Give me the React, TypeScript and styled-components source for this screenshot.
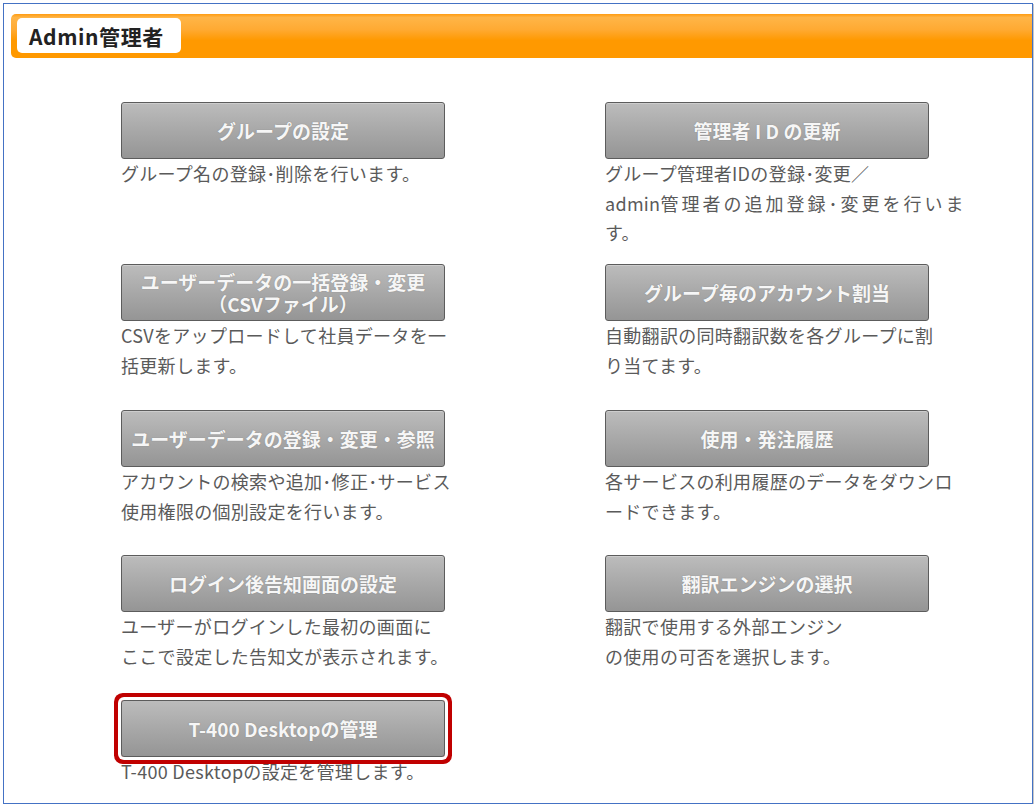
import React from 'react';
import styled, { createGlobalStyle } from 'styled-components';

const GlobalStyle = createGlobalStyle`
  html, body {
    margin: 0;
    padding: 0;
    background: #ffffff;
  }
  body {
    font-family: "Noto Sans CJK JP", "Noto Sans", sans-serif;
  }
`;

// Outer page frame with the thin blue rule
const Frame = styled.div`
  box-sizing: border-box;
  width: 1030px;
  height: 801px;
  margin: 3px 0 0 3px;
  border: 1px solid #4472c4;
  box-shadow: 1px 1px 0 #c8c8c8;
  background: #ffffff;
  overflow: hidden;
`;

// Orange heading bar
const HeaderBar = styled.div`
  display: flex;
  align-items: stretch;
  height: 44px;
  margin: 10px 0 0 7px;
  padding: 4px 0 5px 6px;
  box-sizing: border-box;
  border-radius: 5px 0 0 5px;
  background: linear-gradient(
    to bottom,
    #ff9c12 0%,
    #ffb547 8%,
    #ffaa33 35%,
    #ff9900 60%,
    #ff9900 100%
  );
`;

const TitleTab = styled.div`
  display: flex;
  align-items: center;
  width: 164px;
  box-sizing: border-box;
  padding-left: 12px;
  background: #ffffff;
  border-radius: 5px;
  font-size: 21px;
  font-weight: 700;
  letter-spacing: 0.6px;
  color: #222222;
`;

// Two-column menu
const MenuGrid = styled.div`
  display: grid;
  grid-template-columns: 484px 1fr;
  grid-template-rows: 162px 146px 145px 145px auto;
  margin-top: 44px;
  padding-left: 117px;
`;

const MenuItem = styled.div`
  display: flex;
  flex-direction: column;
  align-items: flex-start;
`;

const MenuButton = styled.button<{ $highlighted?: boolean }>`
  flex-shrink: 0;
  box-sizing: border-box;
  width: 324px;
  height: 57px;
  padding: 0;
  border: 1px solid #5c5c5c;
  border-radius: 3px;
  background: linear-gradient(to bottom, #bcbcbc 0%, #a8a8a8 50%, #959595 100%);
  box-shadow: ${(p) =>
    p.$highlighted
      ? '0 0 0 3px #ffffff, 0 0 0 7px #c00000'
      : 'inset 0 1px 0 rgba(255, 255, 255, 0.25)'};
  font-family: "Noto Sans CJK JP", "Noto Sans", sans-serif;
  font-size: 19px;
  font-weight: 700;
  line-height: 22px;
  color: #f6f6f6;
  text-shadow: 0 0 1px rgba(90, 90, 90, 0.6);
  white-space: nowrap;
  cursor: pointer;
`;

const ButtonLine = styled.span`
  display: block;
`;

const Description = styled.p`
  margin: 0;
  font-size: 18px;
  line-height: 29.5px;
  letter-spacing: 0.3px;
  color: #5a5a5a;
  white-space: nowrap;
`;

const Spread = styled.span<{ $gap: number }>`
  letter-spacing: ${(p) => p.$gap}px;
`;

const App: React.FC = () => {
  return (
    <>
      <GlobalStyle />
      <Frame>
        <HeaderBar>
          <TitleTab>Admin管理者</TitleTab>
        </HeaderBar>

        <MenuGrid>
          <MenuItem>
            <MenuButton>グループの設定</MenuButton>
            <Description>グループ名の登録･削除を行います。</Description>
          </MenuItem>
          <MenuItem>
            <MenuButton>管理者 I D の更新</MenuButton>
            <Description>
              グループ管理者IDの登録･変更／
              <br />
              admin<Spread $gap={3}>管理者の追加登録･変更を行いま</Spread>
              <br />
              す。
            </Description>
          </MenuItem>

          <MenuItem>
            <MenuButton>
              <ButtonLine>ユーザーデータの一括登録・変更</ButtonLine>
              <ButtonLine>（CSVファイル）</ButtonLine>
            </MenuButton>
            <Description>
              CSVをアップロードして社員データを一
              <br />
              括更新します。
            </Description>
          </MenuItem>
          <MenuItem>
            <MenuButton>グループ毎のアカウント割当</MenuButton>
            <Description>
              自動翻訳の同時翻訳数を各グループに割
              <br />
              り当てます。
            </Description>
          </MenuItem>

          <MenuItem>
            <MenuButton>ユーザーデータの登録・変更・参照</MenuButton>
            <Description>
              アカウントの検索や追加･修正･サービス
              <br />
              使用権限の個別設定を行います。
            </Description>
          </MenuItem>
          <MenuItem>
            <MenuButton>使用・発注履歴</MenuButton>
            <Description>
              各サービスの利用履歴のデータをダウンロ
              <br />
              ードできます。
            </Description>
          </MenuItem>

          <MenuItem>
            <MenuButton>ログイン後告知画面の設定</MenuButton>
            <Description>
              ユーザーがログインした最初の画面に
              <br />
              ここで設定した告知文が表示されます。
            </Description>
          </MenuItem>
          <MenuItem>
            <MenuButton>翻訳エンジンの選択</MenuButton>
            <Description>
              翻訳で使用する外部エンジン
              <br />
              の使用の可否を選択します。
            </Description>
          </MenuItem>

          <MenuItem>
            <MenuButton $highlighted>T-400 Desktopの管理</MenuButton>
            <Description>T-400 Desktopの設定を管理します。</Description>
          </MenuItem>
        </MenuGrid>
      </Frame>
    </>
  );
};

export default App;
